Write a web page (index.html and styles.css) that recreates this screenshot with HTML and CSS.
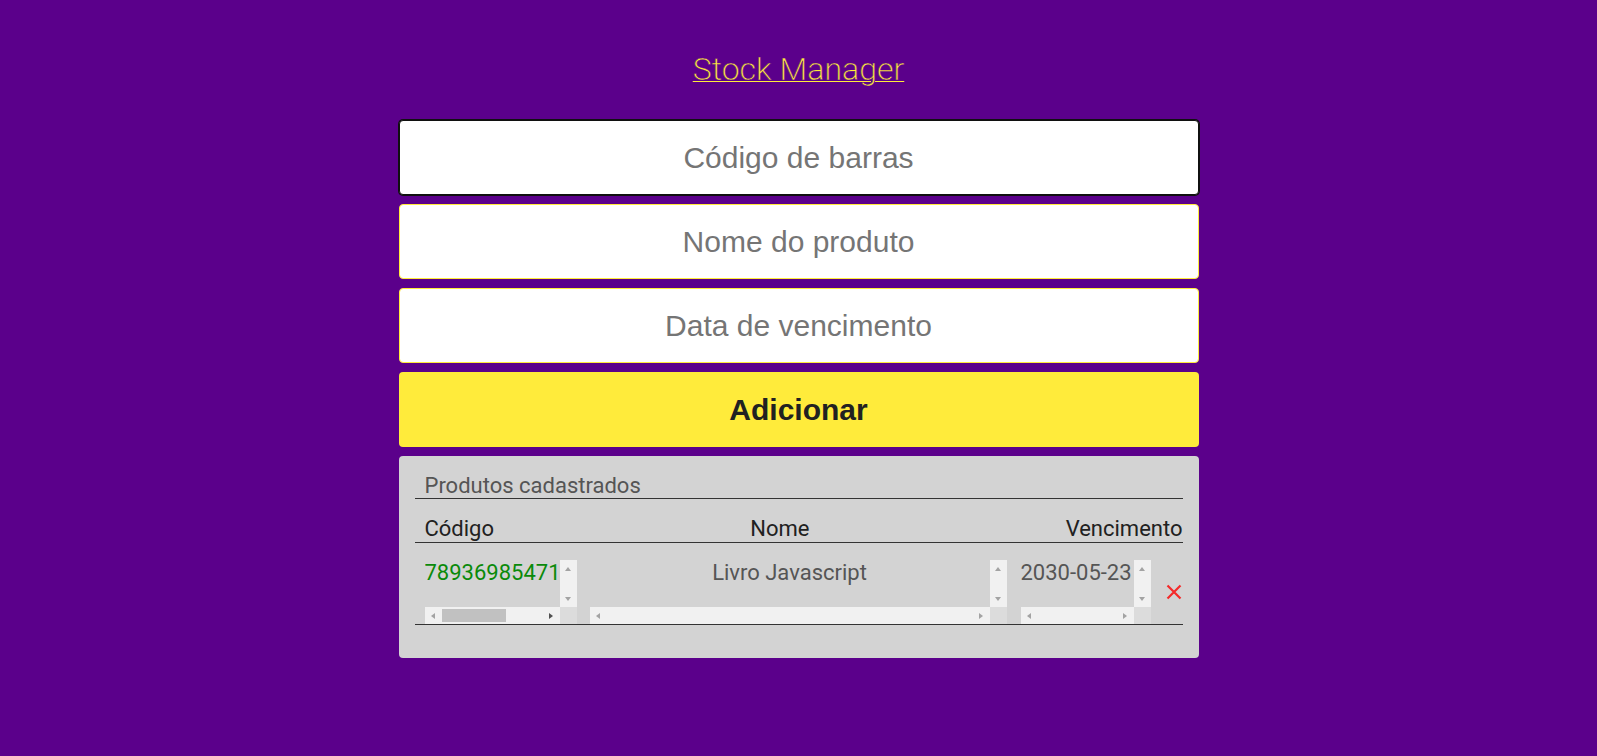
FILE: index.html
```html
<!DOCTYPE html>
<html lang="pt-BR">
<head>
<meta charset="utf-8">
<title>Stock Manager</title>
<link rel="stylesheet" href="styles.css">
</head>
<body>
<main class="app">
  <h1 class="title"><a class="title-link" href="#"><span class="title-text">Stock Manager</span></a></h1>
  <form class="form">
    <input class="field field-focus" type="text" placeholder="Código de barras">
    <input class="field" type="text" placeholder="Nome do produto">
    <input class="field" type="text" placeholder="Data de vencimento">
    <button class="btn" type="button">Adicionar</button>
  </form>
  <section class="panel">
    <div class="caption">Produtos cadastrados</div>
    <div class="thead"><span>Código</span><span>Nome</span><span>Vencimento</span></div>
    <div class="row">
      <div class="sc sc-code">
        <div class="sc-view">789369854712345678</div>
        <div class="sc-vbar"><span class="sc-btn"><i class="arr arr-up"></i></span><span class="sc-btn"><i class="arr arr-down"></i></span></div>
        <div class="sc-hbar"><span class="sc-btn"><i class="arr arr-left"></i></span><span class="sc-thumb"></span><span class="sc-btn sc-btn-end"><i class="arr arr-right arr-on"></i></span></div>
        <div class="sc-corner"></div>
      </div>
      <div class="sc sc-name">
        <div class="sc-view">Livro Javascript</div>
        <div class="sc-vbar"><span class="sc-btn"><i class="arr arr-up"></i></span><span class="sc-btn"><i class="arr arr-down"></i></span></div>
        <div class="sc-hbar"><span class="sc-btn"><i class="arr arr-left"></i></span><span class="sc-btn sc-btn-end"><i class="arr arr-right"></i></span></div>
        <div class="sc-corner"></div>
      </div>
      <div class="sc sc-date">
        <div class="sc-view">2030-05-23</div>
        <div class="sc-vbar"><span class="sc-btn"><i class="arr arr-up"></i></span><span class="sc-btn"><i class="arr arr-down"></i></span></div>
        <div class="sc-hbar"><span class="sc-btn"><i class="arr arr-left"></i></span><span class="sc-btn sc-btn-end"><i class="arr arr-right"></i></span></div>
        <div class="sc-corner"></div>
      </div>
      <button class="del" type="button" aria-label="Remover">
        <svg class="del-icon" viewBox="0 0 16 16" width="16" height="16"><path d="M1.5 1.5 L14.5 14.5 M14.5 1.5 L1.5 14.5"/></svg>
      </button>
    </div>
  </section>
</main>
</body>
</html>
```

FILE: styles.css
```css
html, body {
  margin: 0;
  padding: 0;
}
body {
  background: #5b008b;
  font-family: Roboto, "Liberation Sans", sans-serif;
  min-height: 756px;
}
.app {
  width: 800px;
  margin: 0 auto;
  padding-top: 50px;
}
.title {
  margin: 0 0 32px;
  text-align: center;
  font-family: "Roboto Light", Roboto, sans-serif;
  font-weight: 300;
  font-size: 32px;
  line-height: 38px;
}
.title-link {
  color: #ffeb3b;
  text-decoration: underline;
  text-decoration-thickness: 1px;
}
.title-text {
  -webkit-text-stroke: 0.45px #5b008b;
}
.form {
  display: flex;
  flex-direction: column;
  gap: 9px;
  margin: 0 0 9px;
}
.field {
  box-sizing: border-box;
  height: 75px;
  width: 100%;
  margin: 0;
  padding: 0 10px;
  border: 1px solid #ffeb3b;
  border-radius: 4px;
  background: #fff;
  font-family: "Liberation Sans", Arial, sans-serif;
  font-size: 30px;
  text-align: center;
  color: #333;
  outline: none;
}
.field::placeholder {
  color: #757575;
}
.field-focus {
  border: 1px solid #101010;
  box-shadow: 0 0 0 1px #101010, inset 0 0 0 1px #fff;
}
.btn {
  box-sizing: border-box;
  height: 75px;
  width: 100%;
  margin: 0;
  border: none;
  border-radius: 4px;
  background: #ffeb3b;
  color: #212121;
  font-family: "Liberation Sans", Arial, sans-serif;
  font-weight: 700;
  font-size: 30px;
}
.panel {
  box-sizing: border-box;
  background: #d3d3d3;
  border-radius: 4px;
  padding: 17px 16px 33px;
}
.caption {
  font-size: 22px;
  line-height: normal;
  color: #555;
  padding-left: 10px;
  border-bottom: 1px solid #333;
}
.thead {
  margin-top: 17px;
  display: flex;
  justify-content: space-between;
  padding-left: 10px;
  padding-bottom: 1px;
  border-bottom: 1px solid #333;
  font-size: 22px;
  line-height: normal;
  color: #212121;
}
.row {
  display: flex;
  align-items: center;
  padding: 17px 0 0 10px;
  border-bottom: 1px solid #333;
}

/* textarea-like cells with classic scrollbars */
.sc {
  display: grid;
  grid-template-columns: 1fr 17px;
  grid-template-rows: 47px 17px;
  height: 64px;
  font-family: Roboto, sans-serif;
  font-size: 22px;
  line-height: normal;
  color: #555;
}
.sc-view {
  overflow: hidden;
  white-space: nowrap;
}
.sc-code {
  width: 152px;
}
.sc-code .sc-view {
  color: #0a8a0a;
}
.sc-name {
  width: 417px;
  margin-left: 13px;
}
.sc-name .sc-view {
  text-align: center;
}
.sc-date {
  width: 130px;
  margin-left: 14px;
}
.sc-vbar {
  background: #f1f1f1;
  display: flex;
  flex-direction: column;
  justify-content: space-between;
}
.sc-hbar {
  background: #f1f1f1;
  display: flex;
  align-items: center;
}
.sc-corner {
  background: #dcdcdc;
}
.sc-btn {
  width: 17px;
  height: 17px;
  display: flex;
  align-items: center;
  justify-content: center;
  flex: none;
}
.sc-btn-end {
  margin-left: auto;
}
.sc-thumb {
  width: 64px;
  height: 13px;
  background: #c1c1c1;
}
.arr {
  display: block;
  width: 0;
  height: 0;
  border-style: solid;
  border-color: transparent;
}
.arr-up {
  border-width: 0 3.5px 4px;
  border-bottom-color: #a3a3a3;
}
.arr-down {
  border-width: 4px 3.5px 0;
  border-top-color: #a3a3a3;
}
.arr-left {
  border-width: 3.5px 4px 3.5px 0;
  border-right-color: #a3a3a3;
}
.arr-right {
  border-width: 3.5px 0 3.5px 4px;
  border-left-color: #a3a3a3;
}
.arr-right.arr-on {
  border-left-color: #505050;
}
.del {
  margin: 0 1px 0 auto;
  padding: 0;
  border: none;
  background: transparent;
  width: 16px;
  height: 16px;
  display: flex;
}
.del-icon {
  display: block;
  fill: none;
  stroke: #f42a2a;
  stroke-width: 2.2;
}
```
